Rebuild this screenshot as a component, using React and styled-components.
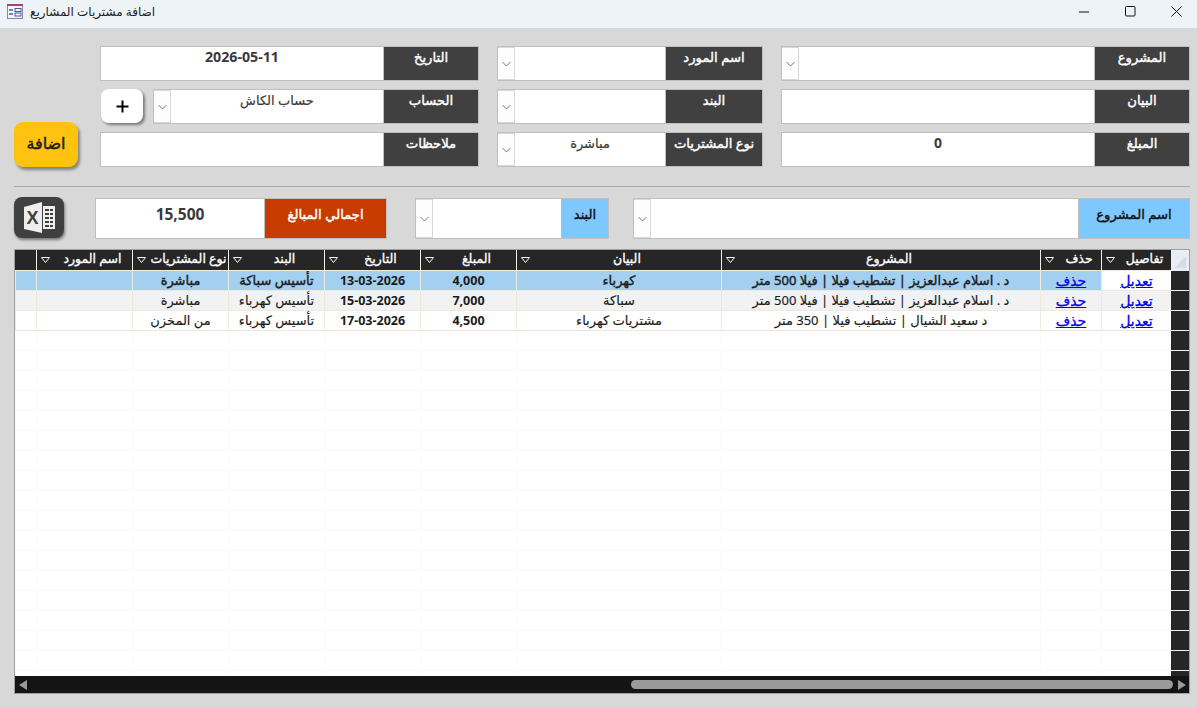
import React from 'react';
import styled, { createGlobalStyle } from 'styled-components';

const GlobalStyle = createGlobalStyle`
  html, body {
    margin: 0;
    height: 100%;
    overflow: hidden;
    background: #d8d8d8;
  }
  * {
    box-sizing: border-box;
  }
`;

const FONT = `"Noto Sans", "DejaVu Sans", sans-serif`;

const Page = styled.div`
  display: flex;
  flex-direction: column;
  height: 100vh;
  font-family: ${FONT};
  background: #d8d8d8;
`;

const TitleBar = styled.div`
  display: flex;
  align-items: center;
  height: 28px;
  flex: none;
  padding: 0 0 5px 7px;
  background: #eef3f8;
`;

const TitleText = styled.span`
  margin-left: 7px;
  font-size: 12px;
  color: #222;
  direction: rtl;
`;

const WindowControls = styled.div`
  display: flex;
  margin-left: auto;
  padding-right: 15px;
  gap: 35px;
`;

const Entry = styled.section`
  display: flex;
  align-items: flex-end;
  gap: 22px;
  padding: 18px 7px 0 14px;
`;

const AddButton = styled.button`
  width: 64px;
  height: 45px;
  padding: 0 0 4px;
  border: none;
  border-radius: 9px;
  background: #ffc20e;
  box-shadow: 2px 3px 3px rgba(0, 0, 0, 0.4);
  font-family: ${FONT};
  font-size: 16px;
  -webkit-text-stroke: 0.45px #1c1c1c;
  color: #1c1c1c;
`;

const FieldGrid = styled.div`
  display: grid;
  grid-template-columns: 379px 266px 409px;
  grid-auto-rows: 35px;
  gap: 8px 18px;
`;

const Field = styled.div`
  display: flex;
  height: 35px;
  border: 1px solid #bfbfbf;
  background: #d8d8d8;
`;

const ArrowBox = styled.div`
  display: flex;
  align-items: center;
  justify-content: center;
  flex: none;
  width: 16px;
  margin: 1px 1px 1px 0;
  background: #fdfdfd;
`;

const Value = styled.div`
  flex: 1;
  line-height: 20px;
  text-align: center;
  direction: rtl;
  background: #fff;
  font-size: ${(p) => p.$size || 13}px;
  font-weight: ${(p) => (p.$bold ? 700 : 400)};
  -webkit-text-stroke: ${(p) => (p.$bold ? 0 : 0.2)}px #3a3a3a;
  color: #3a3a3a;
`;

const Label = styled.div`
  flex: none;
  width: ${(p) => p.$width}px;
  line-height: 20px;
  text-align: center;
  direction: rtl;
  white-space: nowrap;
  font-size: 13.2px;
  -webkit-text-stroke: 0.4px ${(p) => (p.$tone === 'blue' ? '#111' : '#fff')};
  color: ${(p) => (p.$tone === 'blue' ? '#111' : '#fff')};
  background: ${(p) => {
    if (p.$tone === 'blue') return '#7fc7ff';
    if (p.$tone === 'orange') return '#c83c00';
    return '#404040';
  }};
  border-left: 1px solid #bfbfbf;
`;

const WithButton = styled.div`
  display: flex;
  align-items: flex-start;
  gap: 10px;
`;

const PlusButton = styled.button`
  display: flex;
  align-items: center;
  justify-content: center;
  flex: none;
  width: 42px;
  height: 34px;
  margin-left: 1px;
  padding: 0;
  border: none;
  border-radius: 8px;
  background: #fff;
  box-shadow: 2px 2px 3px rgba(0, 0, 0, 0.45);
`;

const GrowField = styled(Field)`
  flex: 1;
`;

const Rule = styled.hr`
  height: 1px;
  margin: 19px 7px 11px 14px;
  border: none;
  background: #a9a9a9;
`;

const FilterBar = styled.section`
  display: flex;
  align-items: flex-start;
  padding: 0 7px 0 14px;
`;

const FilterField = styled(Field)`
  height: 41px;
  flex: ${(p) => (p.$width ? `none` : 1)};
  width: ${(p) => (p.$width ? `${p.$width}px` : 'auto')};
  margin-right: ${(p) => p.$gap || 0}px;

  ${Value}, ${Label} {
    padding-top: 5px;
  }
`;

const ExcelButton = styled.button`
  display: flex;
  align-items: center;
  justify-content: center;
  flex: none;
  width: 50px;
  height: 41px;
  margin-top: -1px;
  margin-right: 31px;
  padding: 0;
  border: none;
  border-radius: 8px;
  background: #404040;
  box-shadow: 1px 2px 3px rgba(0, 0, 0, 0.45);
`;

const Table = styled.div`
  display: flex;
  flex-direction: column;
  flex: 1;
  min-height: 0;
  margin: 10px 7px 14px 14px;
  border: 1px solid #a0a0a0;
  background: #fff;
  direction: rtl;
  overflow: hidden;
`;

const Rows = styled.div`
  flex: 1;
  min-height: 0;
  overflow: hidden;
`;

const COLUMNS = '18px 70px 61px 319px 205px 96px 96px 96px 96px 96px 21px';

const HeaderRow = styled.div`
  display: grid;
  grid-template-columns: ${COLUMNS};
  height: 21px;
  flex: none;
  background: #262626;
`;

const Corner = styled.div`
  display: flex;
  align-items: flex-end;
  justify-content: flex-end;
  background: #e9eef4;
  padding: 2px;
`;

const HeaderCell = styled.div`
  position: relative;
  border-left: 1px solid #f2f2f2;
  border-bottom: 1px solid #f2ecdc;
  padding-left: 16px;
  line-height: 17px;
  text-align: center;
  font-size: 12.5px;
  -webkit-text-stroke: 0.35px #fff;
  color: #fff;
  white-space: nowrap;
  &:last-child {
    border-left: none;
  }
`;

const SortMark = styled.svg`
  position: absolute;
  left: 4px;
  top: 7px;
`;

const Row = styled.div`
  display: grid;
  grid-template-columns: ${COLUMNS};
  height: 20px;
  background: ${(p) => p.$bg};
`;

const Selector = styled.div`
  background: #262626;
  border-bottom: 1px solid #f2f2f2;
`;

const Cell = styled.div`
  border-left: 1px solid ${(p) => (p.$empty ? '#fbfbf5' : '#efe9dc')};
  border-bottom: 1px solid ${(p) => (p.$empty ? '#fbfbf5' : '#efe9dc')};
  line-height: 19px;
  text-align: center;
  font-size: ${(p) => (p.$number ? 12.5 : 13)}px;
  font-weight: ${(p) => (p.$number ? 700 : 400)};
  -webkit-text-stroke: ${(p) => {
    if (p.$number) return 0;
    return p.$strong ? 0.4 : 0.15;
  }}px #1c1c1c;
  color: #1c1c1c;
  white-space: nowrap;
  background: ${(p) => p.$bg || 'transparent'};
`;

const LinkCell = styled(Cell)`
  font-size: 14px;
  -webkit-text-stroke: 0.3px #0000ee;
  color: #0000ee;
  text-decoration: underline;
`;

const ScrollBar = styled.div`
  display: flex;
  align-items: center;
  flex: none;
  height: 17px;
  padding: 0 3px 0 4px;
  background: #141414;
  direction: ltr;
`;

const ScrollTrack = styled.div`
  flex: 1;
  display: flex;
  justify-content: flex-end;
  padding: 0 5px 0 0;
`;

const ScrollThumb = styled.div`
  width: 542px;
  height: 9px;
  border-radius: 5px;
  background: #9a9a9a;
`;

const Chevron = () => (
  <svg width="9" height="6" viewBox="0 0 9 6">
    <path d="M0.5 1 L4.5 5 L8.5 1" fill="none" stroke="#555" strokeWidth="0.8" />
  </svg>
);

const ComboArrow = () => (
  <ArrowBox>
    <Chevron />
  </ArrowBox>
);

const FormIcon = () => (
  <svg width="16" height="15" viewBox="0 0 16 15">
    <rect x="0.5" y="0.5" width="15" height="14" fill="#f2f5fb" stroke="#8a86a8" />
    <rect x="0" y="0" width="16" height="2" fill="#a8485f" />
    <path d="M2 6 H6 M2 10 H6" stroke="#4f5a96" strokeWidth="1.3" />
    <rect x="8" y="4.5" width="6" height="3" fill="none" stroke="#4f5a96" />
    <rect x="8" y="9" width="6" height="3" fill="none" stroke="#4f5a96" />
  </svg>
);

const MinIcon = () => (
  <svg width="11" height="11" viewBox="0 0 11 11">
    <path d="M0 6 H10" stroke="#111" strokeWidth="1" />
  </svg>
);

const MaxIcon = () => (
  <svg width="11" height="11" viewBox="0 0 11 11">
    <rect x="0.5" y="0.5" width="9.5" height="9.5" rx="1" fill="none" stroke="#111" />
  </svg>
);

const CloseIcon = () => (
  <svg width="11" height="11" viewBox="0 0 11 11">
    <path d="M0.5 0.5 L10.5 10.5 M10.5 0.5 L0.5 10.5" stroke="#111" strokeWidth="1" />
  </svg>
);

const PlusIcon = () => (
  <svg width="13" height="13" viewBox="0 0 13 13">
    <path d="M6.5 0.5 V12.5 M0.5 6.5 H12.5" stroke="#000" strokeWidth="2" />
  </svg>
);

const ExcelIcon = () => (
  <svg width="31" height="31" viewBox="0 0 31 31">
    <path d="M0 5 L18 0 V31 L0 27 Z" fill="#eeeeee" />
    <text x="2.5" y="22" fontFamily="Liberation Sans, sans-serif" fontSize="18" fontWeight="700" fill="#404040">X</text>
    <path d="M19 4 H31 V27 H19 Z" fill="#eeeeee" />
    <path d="M21 8 H25 M26 8 H29 M21 12 H25 M26 12 H29 M21 16 H25 M26 16 H29 M21 20 H25 M26 20 H29 M21 24 H25 M26 24 H29" stroke="#404040" strokeWidth="2" />
  </svg>
);

const columns = ['تفاصيل', 'حذف', 'المشروع', 'البيان', 'المبلغ', 'التاريخ', 'البند', 'نوع المشتريات', 'اسم المورد', ''];

const records = [
  { project: 'د . اسلام عبدالعزيز | تشطيب فيلا | فيلا 500 متر', note: 'كهرباء', amount: '4,000', date: '13-03-2026', item: 'تأسيس سباكة', kind: 'مباشرة', bg: '#a3cff0', strong: true },
  { project: 'د . اسلام عبدالعزيز | تشطيب فيلا | فيلا 500 متر', note: 'سباكة', amount: '7,000', date: '15-03-2026', item: 'تأسيس كهرباء', kind: 'مباشرة', bg: '#f2f2f2' },
  { project: 'د سعيد الشيال | تشطيب فيلا | 350 متر', note: 'مشتريات كهرباء', amount: '4,500', date: '17-03-2026', item: 'تأسيس كهرباء', kind: 'من المخزن', bg: '#fff' },
];

const emptyRows = Array.from({ length: 18 }, (_, i) => i);

function App() {
  return (
    <Page>
      <GlobalStyle />
      <TitleBar>
        <FormIcon />
        <TitleText>اضافة مشتريات المشاريع</TitleText>
        <WindowControls>
          <MinIcon />
          <MaxIcon />
          <CloseIcon />
        </WindowControls>
      </TitleBar>

      <Entry>
        <AddButton>اضافة</AddButton>
        <FieldGrid>
          <Field>
            <Value $bold $size={14.2}>2026-05-11</Value>
            <Label $width={95}>التاريخ</Label>
          </Field>
          <Field>
            <ComboArrow />
            <Value />
            <Label $width={97}>اسم المورد</Label>
          </Field>
          <Field>
            <ComboArrow />
            <Value />
            <Label $width={95}>المشروع</Label>
          </Field>

          <WithButton>
            <PlusButton><PlusIcon /></PlusButton>
            <GrowField>
              <ComboArrow />
              <Value>حساب الكاش</Value>
              <Label $width={95}>الحساب</Label>
            </GrowField>
          </WithButton>
          <Field>
            <ComboArrow />
            <Value />
            <Label $width={97}>البند</Label>
          </Field>
          <Field>
            <Value />
            <Label $width={95}>البيان</Label>
          </Field>

          <Field>
            <Value />
            <Label $width={95}>ملاحظات</Label>
          </Field>
          <Field>
            <ComboArrow />
            <Value>مباشرة</Value>
            <Label $width={97}>نوع المشتريات</Label>
          </Field>
          <Field>
            <Value $bold $size={14}>0</Value>
            <Label $width={95}>المبلغ</Label>
          </Field>
        </FieldGrid>
      </Entry>

      <Rule />

      <FilterBar>
        <ExcelButton><ExcelIcon /></ExcelButton>
        <FilterField $width={292} $gap={28}>
          <Value $bold $size={15.5}>15,500</Value>
          <Label $width={122} $tone="orange">اجمالي المبالغ</Label>
        </FilterField>
        <FilterField $width={194} $gap={24}>
          <ComboArrow />
          <Value />
          <Label $width={47} $tone="blue">البند</Label>
        </FilterField>
        <FilterField>
          <ComboArrow />
          <Value />
          <Label $width={111} $tone="blue">اسم المشروع</Label>
        </FilterField>
      </FilterBar>

      <Table>
        <HeaderRow>
          <Corner>
            <svg width="14" height="14" viewBox="0 0 14 14">
              <path d="M1 1 L13 13 H1 Z" fill="#d5dde6" transform="matrix(-1 0 0 1 14 0)" />
            </svg>
          </Corner>
          {columns.map((title, i) => (
            <HeaderCell key={i}>
              {title}
              {title && (
                <SortMark width="9" height="6" viewBox="0 0 9 6">
                  <path d="M0.5 0.5 H8.5 L4.5 5.5 Z" fill="none" stroke="#fff" strokeWidth="1" />
                </SortMark>
              )}
            </HeaderCell>
          ))}
        </HeaderRow>
        <Rows>
          {records.map((r, i) => (
            <Row key={r.date} $bg={r.bg}>
              <Selector />
              <LinkCell $bg={i === 0 ? '#fff' : undefined}>تعديل</LinkCell>
              <LinkCell>حذف</LinkCell>
              <Cell $strong={r.strong}>{r.project}</Cell>
              <Cell $strong={r.strong}>{r.note}</Cell>
              <Cell $number>{r.amount}</Cell>
              <Cell $number>{r.date}</Cell>
              <Cell $strong={r.strong}>{r.item}</Cell>
              <Cell $strong={r.strong}>{r.kind}</Cell>
              <Cell />
              <Cell />
            </Row>
          ))}
          {emptyRows.map((n) => (
            <Row key={n} $bg="#fff">
              <Selector />
              {columns.map((_, i) => (
                <Cell key={i} $empty />
              ))}
            </Row>
          ))}
        </Rows>
        <ScrollBar>
          <svg width="8" height="10" viewBox="0 0 8 10">
            <path d="M8 0 V10 L0 5 Z" fill="#9a9a9a" />
          </svg>
          <ScrollTrack>
            <ScrollThumb />
          </ScrollTrack>
          <svg width="8" height="10" viewBox="0 0 8 10">
            <path d="M0 0 V10 L8 5 Z" fill="#9a9a9a" />
          </svg>
        </ScrollBar>
      </Table>
    </Page>
  );
}

export default App;
